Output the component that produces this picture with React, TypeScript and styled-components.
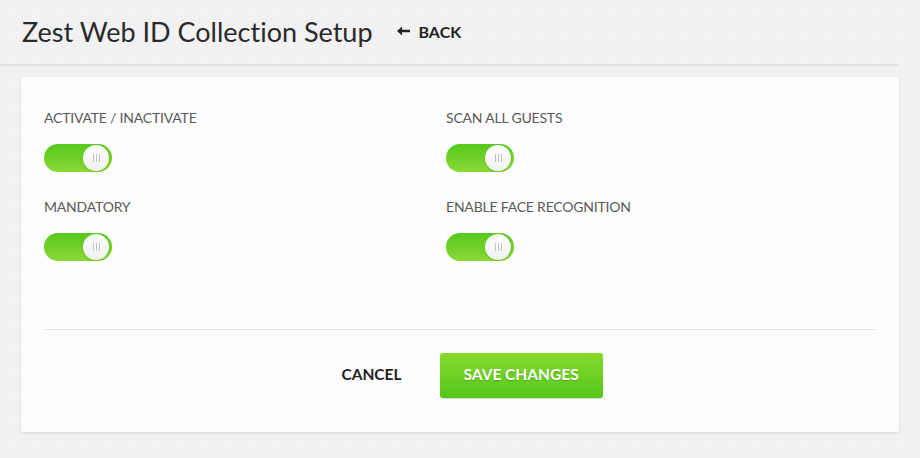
import React, { FunctionComponent, useState } from 'react';
import styled, { createGlobalStyle } from 'styled-components';

const GlobalStyle = createGlobalStyle`
  html, body {
    margin: 0;
    padding: 0;
  }
  body {
    background-color: #f2f2f2;
    background-image: radial-gradient(rgba(0, 0, 0, 0.018) 1px, transparent 1px);
    background-size: 3px 3px;
    font-family: Lato, "Liberation Sans", sans-serif;
    font-variant-ligatures: no-common-ligatures;
    font-feature-settings: "liga" 0, "dlig" 0;
    color: #222;
  }
`;

const Page = styled.div`
  width: 920px;
  height: 458px;
  overflow: hidden;
`;

const Header = styled.div`
  display: flex;
  align-items: center;
  gap: 24px;
  height: 66px;
  padding: 0 0 2px 22px;
  box-sizing: border-box;
  width: 899px;
  border-bottom: 2px solid #e0e0e0;
`;

const Title = styled.h1`
  margin: 0;
  font-size: 27px;
  font-weight: 400;
  color: #2a2a2a;
`;

const BackLink = styled.a`
  display: flex;
  align-items: center;
  gap: 8px;
  font-size: 16px;
  font-weight: 700;
  color: #222;
  text-decoration: none;
  cursor: pointer;
`;

const Card = styled.div`
  margin: 11px 0 0 21px;
  width: 878px;
  height: 355px;
  background: #fdfdfd;
  box-shadow: 0 1px 3px rgba(0, 0, 0, 0.12);
  border-radius: 2px;
  padding: 0 23px;
  box-sizing: border-box;
  display: flex;
  flex-direction: column;
`;

const Grid = styled.div`
  display: grid;
  grid-template-columns: 402px 1fr;
  row-gap: 25px;
  padding-top: 31px;
  height: 252px;
  box-sizing: border-box;
  align-content: start;
`;

const Field = styled.div`
  display: flex;
  flex-direction: column;
  gap: 16px;
`;

const Label = styled.div`
  font-size: 14px;
  letter-spacing: -0.2px;
  color: #5a5a5a;
  text-transform: uppercase;
  line-height: 20px;
`;

const Track = styled.button<{ $on: boolean }>`
  position: relative;
  width: 68px;
  height: 28px;
  border: none;
  padding: 0;
  border-radius: 14px;
  cursor: pointer;
  background: ${(p) =>
    p.$on ? 'linear-gradient(#56c81b, #8ad936)' : 'linear-gradient(#cfcfcf, #e0e0e0)'};
`;

const Knob = styled.span<{ $on: boolean }>`
  position: absolute;
  top: 1px;
  left: ${(p) => (p.$on ? '39px' : '1px')};
  width: 26px;
  height: 26px;
  border-radius: 50%;
  background: linear-gradient(#ffffff, #f1f1f1);
  box-shadow: 0 1px 2px rgba(0, 0, 0, 0.15);
  display: flex;
  align-items: center;
  justify-content: center;
  gap: 2px;
`;

const Grip = styled.span`
  width: 1px;
  height: 8px;
  background: #c4c4c4;
`;

const Divider = styled.div`
  height: 1px;
  background: #e2e2e2;
`;

const Actions = styled.div`
  display: flex;
  justify-content: center;
  align-items: center;
  gap: 38px;
  padding-top: 23px;
  padding-left: 24px;
`;

const CancelButton = styled.button`
  border: none;
  background: none;
  font-family: inherit;
  font-size: 15.5px;
  font-weight: 700;
  color: #222;
  cursor: pointer;
  padding: 0 0 3px;
`;

const SaveButton = styled.button`
  width: 163px;
  height: 45px;
  border: none;
  border-radius: 3px;
  padding: 0 0 3px;
  background: linear-gradient(#88da30, #54c619);
  box-shadow: 0 1px 1px rgba(0, 0, 0, 0.15);
  color: #fff;
  font-family: inherit;
  font-size: 15.5px;
  font-weight: 700;
  text-shadow: 0 1px 1px rgba(0, 0, 0, 0.2);
  cursor: pointer;
`;

interface ToggleProps {
  label: string;
}

const ToggleField: FunctionComponent<ToggleProps> = ({ label }) => {
  const [on, setOn] = useState(true);
  return (
    <Field>
      <Label>{label}</Label>
      <Track $on={on} onClick={() => setOn(!on)}>
        <Knob $on={on}>
          <Grip />
          <Grip />
          <Grip />
        </Knob>
      </Track>
    </Field>
  );
};

const App: FunctionComponent = () => (
  <Page>
    <GlobalStyle />
    <Header>
      <Title>Zest Web ID Collection Setup</Title>
      <BackLink>
        <svg width="14" height="10" viewBox="0 0 14 10">
          <path d="M0 5 L5 0.5 L5 3.8 L13 3.8 L13 6.2 L5 6.2 L5 9.5 Z" fill="#222" />
        </svg>
        BACK
      </BackLink>
    </Header>
    <Card>
      <Grid>
        <ToggleField label="Activate / Inactivate" />
        <ToggleField label="Scan all guests" />
        <ToggleField label="Mandatory" />
        <ToggleField label="Enable face recognition" />
      </Grid>
      <Divider />
      <Actions>
        <CancelButton>CANCEL</CancelButton>
        <SaveButton>SAVE CHANGES</SaveButton>
      </Actions>
    </Card>
  </Page>
);

export default App;
